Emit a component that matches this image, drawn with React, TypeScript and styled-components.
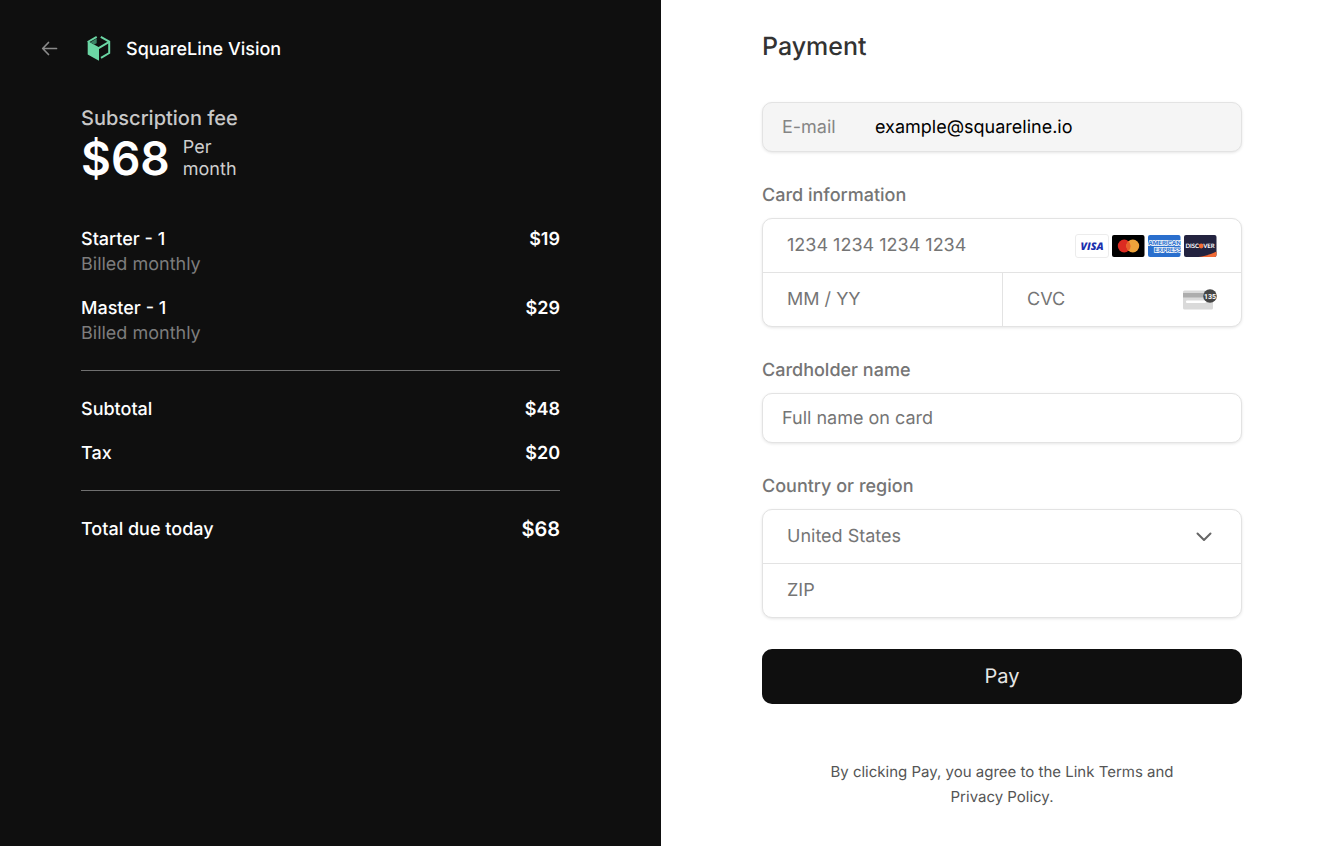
import React from "react";
import styled, { createGlobalStyle } from "styled-components";

const GlobalStyle = createGlobalStyle`
  *, *::before, *::after { box-sizing: border-box; }
  body {
    margin: 0;
    background: #ffffff;
    font-family: Inter, "Liberation Sans", sans-serif;
    font-size: 18px;
    line-height: 25px;
    text-rendering: geometricPrecision;
  }
  button, input, select { font: inherit; text-rendering: inherit; }
`;

const Page = styled.main`
  display: grid;
  grid-template-columns: minmax(0, 661fr) minmax(0, 671fr);
  min-height: 100vh;
`;

const Summary = styled.section`
  background: #0f0f0f;
  color: #ffffff;
  font-weight: 500;
  padding: 33px 101px 32px 81px;
`;

const Brand = styled.header`
  display: flex;
  align-items: center;
  height: 32px;
  margin-left: -40px;
`;

const BackButton = styled.button`
  display: flex;
  padding: 0;
  border: 0;
  background: none;
  color: #8a8a8a;
  cursor: pointer;
`;

const Logo = styled.svg`
  margin: 0 15px 0 29px;
`;

const FeeTitle = styled.h2`
  margin: 41px 0 0;
  font-size: 20px;
  font-weight: 500;
  color: #c8c8c8;
`;

const Fee = styled.div`
  display: flex;
  align-items: center;
  gap: 13px;
  height: 56px;
`;

const FeeAmount = styled.span`
  font-size: 46px;
  line-height: 56px;
  font-weight: 600;
`;

const FeePeriod = styled.span`
  width: min-content;
  line-height: 22px;
  font-weight: 400;
  color: #cfcfcf;
`;

const Lines = styled.dl`
  display: flex;
  flex-direction: column;
  gap: 19px;
  margin: 0;
`;

const Line = styled.div`
  display: flex;
  justify-content: space-between;
`;

const Name = styled.dt``;

const Note = styled.small`
  display: block;
  font-size: 18px;
  font-weight: 400;
  color: #7d7d7d;
`;

const Amount = styled.dd<{ $large?: boolean }>`
  margin: 0;
  font-size: ${(p) => (p.$large ? 20 : 18)}px;
  font-weight: 600;
`;

const Items = styled.div`
  margin-top: 40px;
`;

const Rule = styled.hr`
  height: 1px;
  margin: 24px 0 26px;
  border: 0;
  background: #6f6f6f;
`;

const Checkout = styled.form`
  display: flex;
  flex-direction: column;
  gap: 31px;
  padding: 31px 90px 32px 101px;
  color: #757575;
`;

const Heading = styled.h1`
  margin: 0 0 8px;
  font-size: 25px;
  line-height: 32px;
  font-weight: 500;
  color: #333333;
`;

const Group = styled.fieldset`
  display: flex;
  flex-direction: column;
  min-width: 0;
  margin: 0;
  padding: 0;
  border: 0;
`;

const labelStyle = `
  display: block;
  padding: 0;
  margin: 0 0 10px;
  font-weight: 500;
`;

const Legend = styled.legend`${labelStyle}`;
const Label = styled.label`${labelStyle}`;

const Box = styled.div<{ $filled?: boolean }>`
  border: 1px solid #e3e3e3;
  border-radius: 10px;
  background: ${(p) => (p.$filled ? "#f5f5f5" : "#ffffff")};
  box-shadow: 0 1px 3px rgba(0, 0, 0, 0.1);
`;

const Row = styled.div<{ $tall?: boolean }>`
  display: flex;
  align-items: center;
  min-width: 0;
  height: ${(p) => (p.$tall ? 53 : 48)}px;
  padding: 0 ${(p) => (p.$tall ? "24px" : "19px")};
`;

const Split = styled.div`
  display: grid;
  grid-template-columns: minmax(0, 1fr) minmax(0, 1fr);
  border-top: 1px solid #e3e3e3;

  & > * + * { border-left: 1px solid #e3e3e3; }
`;

const Divided = styled.div`
  border-top: 1px solid #e3e3e3;
`;

const Field = styled.input`
  flex: 1;
  width: 100%;
  min-width: 0;
  padding: 0;
  border: 0;
  outline: 0;
  background: none;
  color: #000000;

  &::placeholder { color: #757575; opacity: 1; }
`;

const EmailLabel = styled.label`
  flex: none;
  width: 93px;
  color: #858585;
`;

const Country = styled.select`
  flex: 1;
  min-width: 0;
  padding: 0;
  border: 0;
  outline: 0;
  appearance: none;
  background: none;
  color: #757575;
`;

const Chevron = styled.svg`
  flex: none;
  margin-right: 4px;
  pointer-events: none;
`;

const Cards = styled.div`
  display: flex;
  flex: none;
  gap: 2px;
`;

const PayButton = styled.button`
  height: 55px;
  border: 0;
  border-radius: 10px;
  background: #0f0f0f;
  color: #e6e6e6;
  font-size: 20px;
  font-weight: 400;
  cursor: pointer;
`;

const Terms = styled.p`
  width: 350px;
  max-width: 100%;
  margin: 24px auto 0;
  font-size: 15px;
  text-align: center;
  color: #555555;
`;

const Visa = () => (
  <svg width="34" height="24" viewBox="0 0 34 24" role="img" aria-label="Visa">
    <rect x="0.5" y="0.5" width="33" height="23" rx="2.5" fill="#fff" stroke="#ececec" />
    <text x="17" y="15.6" textAnchor="middle" fontFamily="Open Sans, sans-serif" fontSize="10.5" fontWeight="800" fontStyle="italic" fill="#1a2fae">VISA</text>
  </svg>
);

const Mastercard = () => (
  <svg width="34" height="24" viewBox="0 0 34 24" role="img" aria-label="Mastercard">
    <rect x="1" y="1" width="32.5" height="22" rx="2" fill="#000" />
    <circle cx="13.2" cy="12" r="6.4" fill="#dc2b22" />
    <circle cx="21.8" cy="12" r="6.4" fill="#eda33b" />
    <path d="M17.5 7.26a6.4 6.4 0 0 1 0 9.48a6.4 6.4 0 0 1 0-9.48z" fill="#e8602b" />
  </svg>
);

const Amex = () => (
  <svg width="34" height="24" viewBox="0 0 34 24" role="img" aria-label="American Express">
    <rect x="1" y="1" width="32.5" height="22" rx="2" fill="#2a6fcd" />
    <g fontFamily="Inter, sans-serif" fontSize="6" fontWeight="700" fill="#2a6fcd" stroke="#ffffff" strokeWidth="1.3" paintOrder="stroke">
      <text x="1.2" y="11">AMERICAN</text>
      <text x="7.2" y="18">EXPRESS</text>
    </g>
  </svg>
);

const Discover = () => (
  <svg width="34" height="24" viewBox="0 0 34 24" role="img" aria-label="Discover">
    <rect x="1" y="1" width="32.5" height="22" rx="2" fill="#23233f" />
    <path d="M33.5 17.5V21a2 2 0 0 1-2 2H15.5C23 21.8 29 20 33.5 17.5z" fill="#f26a35" />
    <g fontFamily="Lato, sans-serif" fontSize="6" fontWeight="700" fill="#fff">
      <text x="16" y="14.2" textAnchor="end">DISC</text>
      <text x="20.2" y="14.2">VER</text>
    </g>
    <circle cx="18.2" cy="12" r="2.4" fill="#f26a35" />
  </svg>
);

const CvcCard = () => (
  <svg width="34" height="22" viewBox="0 0 34 22" role="img" aria-label="Security code">
    <rect x="0" y="1.5" width="30" height="19" rx="1.5" fill="#dadada" />
    <rect x="0" y="4" width="30" height="4.5" fill="#adadad" />
    <rect x="3" y="11.5" width="20" height="2.5" rx="1" fill="#fff" />
    <circle cx="27" cy="7" r="6.8" fill="#454545" />
    <text x="27" y="9.6" textAnchor="middle" fontFamily="Roboto, sans-serif" fontSize="7" fontWeight="700" fill="#fff">135</text>
  </svg>
);

const items = [
  { name: "Starter - 1", note: "Billed monthly", amount: "$19" },
  { name: "Master - 1", note: "Billed monthly", amount: "$29" },
];

const totals = [
  { name: "Subtotal", amount: "$48" },
  { name: "Tax", amount: "$20" },
];

export default function App() {
  return (
    <>
      <GlobalStyle />
      <Page>
        <Summary>
          <Brand>
            <BackButton type="button" aria-label="Back">
              <svg width="17" height="16" viewBox="0 0 17 16" fill="none" stroke="currentColor" strokeWidth="1.7" strokeLinecap="round" strokeLinejoin="round">
                <path d="M15.5 7.5H2M7.5 1.5L1.7 7.5l5.8 6" />
              </svg>
            </BackButton>
            <Logo width="24" height="26" viewBox="0 0 24 26" aria-hidden="true">
              <path d="M0.7 5L12 11.3V24.700L0.700 18.400z" fill="#6bd6a4" />
              <path d="M3.400 6.200L9.700 2.400V7.300L7 8.600z" fill="#3b8466" />
              <path d="M0.700 6L9.700 0.900" stroke="#6bd6a4" strokeWidth="1.900" fill="none" />
              <path d="M13.800 0.900L22.200 5.600V17L14 21.900" stroke="#6bd6a4" strokeWidth="2" fill="none" />
              <path d="M11.200 12.300L22.200 5.800" stroke="#6bd6a4" strokeWidth="2" />
            </Logo>
            SquareLine Vision
          </Brand>

          <FeeTitle>Subscription fee</FeeTitle>
          <Fee>
            <FeeAmount>$68</FeeAmount>
            <FeePeriod>Per month</FeePeriod>
          </Fee>

          <Items>
            <Lines>
              {items.map((item) => (
                <Line key={item.name}>
                  <Name>
                    {item.name}
                    <Note>{item.note}</Note>
                  </Name>
                  <Amount>{item.amount}</Amount>
                </Line>
              ))}
            </Lines>
          </Items>
          <Rule />
          <Lines>
            {totals.map((total) => (
              <Line key={total.name}>
                <Name>{total.name}</Name>
                <Amount>{total.amount}</Amount>
              </Line>
            ))}
          </Lines>
          <Rule />
          <Lines>
            <Line>
              <Name>Total due today</Name>
              <Amount $large>$68</Amount>
            </Line>
          </Lines>
        </Summary>

        <Checkout onSubmit={(e) => e.preventDefault()}>
          <Heading>Payment</Heading>

          <Box $filled>
            <Row>
              <EmailLabel htmlFor="email">E-mail</EmailLabel>
              <Field id="email" type="email" defaultValue="example@squareline.io" />
            </Row>
          </Box>

          <Group>
            <Legend>Card information</Legend>
            <Box>
              <Row $tall>
                <Field aria-label="Card number" placeholder="1234 1234 1234 1234" />
                <Cards>
                  <Visa />
                  <Mastercard />
                  <Amex />
                  <Discover />
                </Cards>
              </Row>
              <Split>
                <Row $tall>
                  <Field aria-label="Expiry date" placeholder="MM / YY" />
                </Row>
                <Row $tall>
                  <Field aria-label="Security code" placeholder="CVC" />
                  <CvcCard />
                </Row>
              </Split>
            </Box>
          </Group>

          <Group>
            <Label htmlFor="holder">Cardholder name</Label>
            <Box>
              <Row>
                <Field id="holder" placeholder="Full name on card" />
              </Row>
            </Box>
          </Group>

          <Group>
            <Legend>Country or region</Legend>
            <Box>
              <Row $tall>
                <Country aria-label="Country">
                  <option>United States</option>
                </Country>
                <Chevron width="18" height="12" viewBox="0 0 18 12" fill="none" stroke="#666666" strokeWidth="2" strokeLinecap="round" strokeLinejoin="round">
                  <path d="M2.5 2.5L9 9l6.5-6.5" />
                </Chevron>
              </Row>
              <Divided>
                <Row $tall>
                  <Field aria-label="ZIP code" placeholder="ZIP" />
                </Row>
              </Divided>
            </Box>
          </Group>

          <PayButton type="submit">Pay</PayButton>
          <Terms>By clicking Pay, you agree to the Link Terms and Privacy Policy.</Terms>
        </Checkout>
      </Page>
    </>
  );
}
